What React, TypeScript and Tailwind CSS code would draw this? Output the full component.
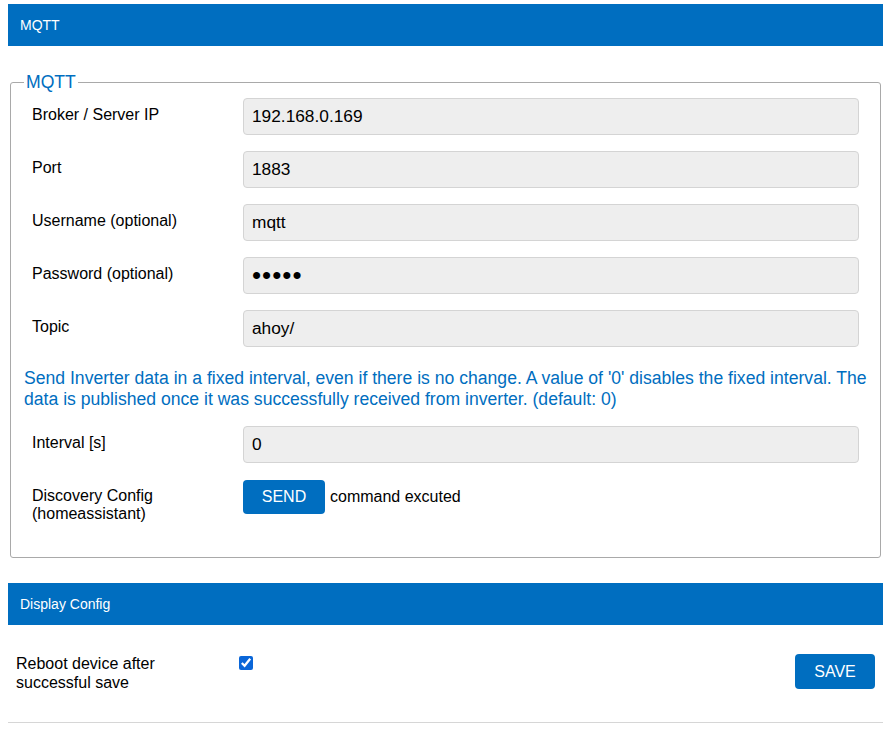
import { useState } from 'react';

const fields = [
  { id: 'mqttAddr', label: 'Broker / Server IP', value: '192.168.0.169', type: 'text' },
  { id: 'mqttPort', label: 'Port', value: '1883', type: 'text' },
  { id: 'mqttUser', label: 'Username (optional)', value: 'mqtt', type: 'text' },
  { id: 'mqttPwd', label: 'Password (optional)', value: '12345', type: 'password' },
  { id: 'mqttTopic', label: 'Topic', value: 'ahoy/', type: 'text' },
];

function SectionHead({ title }: { title: string }) {
  return (
    <div className="flex h-[42px] items-center bg-[#006ec0] px-3 text-[14px] text-white">
      {title}
    </div>
  );
}

function Row({ label, children }: { label: React.ReactNode; children: React.ReactNode }) {
  return (
    <div className="grid grid-cols-[211px_1fr] items-start">
      <div className="pt-[8px] leading-[18px]">{label}</div>
      <div>{children}</div>
    </div>
  );
}

function TextInput({ id, value, type }: { id: string; value: string; type: string }) {
  const [v, setV] = useState(value);
  return (
    <input
      id={id}
      type={type}
      value={v}
      onChange={(e) => setV(e.target.value)}
      className={
        type === 'password'
          ? 'h-[37px] w-full rounded-[4px] border border-[#d4d4d4] bg-[#eeeeee] px-2 text-[26px] tracking-[1px] text-black outline-none'
          : 'h-[37px] w-full rounded-[4px] border border-[#d4d4d4] bg-[#eeeeee] px-2 text-[17.3px] text-black outline-none'
      }
    />
  );
}

export default function App() {
  const [reboot, setReboot] = useState(true);

  return (
    <div className="px-2 pt-1 text-[16px] text-black [font-family:'Liberation_Sans',Arial,sans-serif]">
      <SectionHead title="MQTT" />

      <fieldset className="mx-[2px] mt-[27px] rounded-[3px] border border-[#a9a9a9] px-[21px] pb-[34px] pt-[7px]">
        <legend className="ml-[-8px] px-[2px] text-[17.6px] leading-[18px] text-[#006ec0]">MQTT</legend>

        <div className="flex flex-col gap-[16px]">
          {fields.map((f) => (
            <Row key={f.id} label={f.label}>
              <TextInput id={f.id} value={f.value} type={f.type} />
            </Row>
          ))}
        </div>

        <p className="ml-[-8px] mr-[-8px] mt-[21px] text-[17.6px] leading-[21px] text-[#006ec0]">
          Send Inverter data in a fixed interval, even if there is no change. A value of '0' disables the fixed interval. The data is published once it was successfully received from inverter. (default: 0)
        </p>

        <div className="mt-[16px]">
          <Row label="Interval [s]">
            <TextInput id="mqttInterval" value="0" type="text" />
          </Row>
        </div>

        <div className="mt-[17px]">
          <Row
            label={
              <span className="block mt-[-1px]">
                Discovery Config
                <br />
                (homeassistant)
              </span>
            }
          >
            <div className="flex items-center gap-[5px]">
              <button
                type="button"
                className="h-[34px] w-[82px] rounded-[4px] bg-[#006ec0] text-[16px] text-white"
              >
                SEND
              </button>
              <span>command excuted</span>
            </div>
          </Row>
        </div>
      </fieldset>

      <div className="mt-[25px]">
        <SectionHead title="Display Config" />
      </div>

      <div className="mt-[29px] flex items-start pl-2 pr-2">
        <div className="w-[223px] pt-0 leading-[19px]">
          Reboot device after
          <br />
          successful save
        </div>
        <input
          type="checkbox"
          checked={reboot}
          onChange={(e) => setReboot(e.target.checked)}
          className="mt-[2px] h-[14px] w-[14px] accent-[#0a66d8]"
        />
        <div className="flex-1" />
        <button
          type="button"
          className="h-[35px] w-[80px] rounded-[4px] bg-[#006ec0] text-[16px] text-white"
        >
          SAVE
        </button>
      </div>

      <hr className="mt-[30px] border-t border-[#d6d6d6]" />
    </div>
  );
}
